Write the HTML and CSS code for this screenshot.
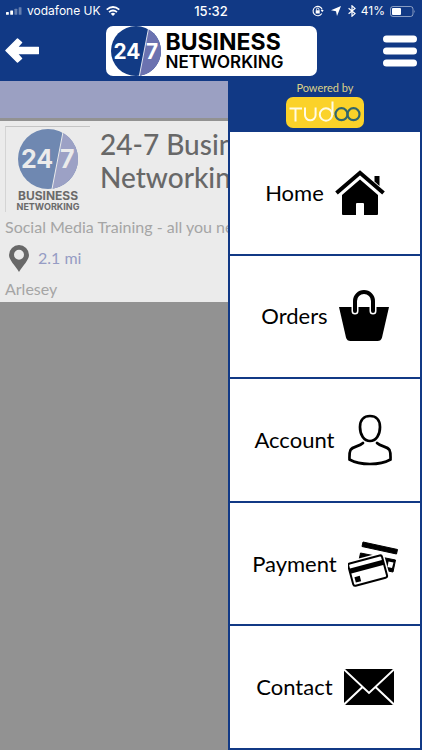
FILE: index.html
```html
<!DOCTYPE html>
<html lang="en">
<head>
<meta charset="utf-8">
<meta name="viewport" content="width=device-width, initial-scale=1">
<title>24-7 Business Networking</title>
<link rel="stylesheet" href="styles.css">
</head>
<body>
<div class="app">
  <div class="status">
    <div class="status-side">
      <svg class="signal" viewBox="0 0 17 8" aria-hidden="true"><g fill="#fff"><rect x="0" y="5" width="3" height="3" rx=".6"/><rect x="4.500" y="3.500" width="3" height="4.500" rx=".6"/><rect x="9" y="1.500" width="3" height="6.500" rx=".6" opacity=".35"/><rect x="13.500" y="0" width="3" height="8" rx=".6" opacity=".35"/></g></svg>
      <span>vodafone UK</span>
      <svg class="wifi" viewBox="0 0 14 10" fill="none" stroke="#fff" stroke-width="1.700" aria-hidden="true"><path d="M.7 3.700Q7-1.700 13.300 3.700M3 6.200Q7 2.800 11 6.200"/><path d="M7 10 4.700 7.700Q7 5.900 9.300 7.700Z" fill="#fff" stroke="none"/></svg>
    </div>
    <span class="clock">15:32</span>
    <div class="status-side status-right">
      <svg class="glyph lock" viewBox="0 0 12 12" fill="none" stroke="#fff" aria-hidden="true"><path d="M9.800 8.500A4.700 4.700 0 1 1 10.200 4.500" stroke-width="1.100"/><path d="M8.700 5h3L10.200 7.200Z" fill="#fff" stroke="none"/><rect x="3.700" y="5.300" width="4" height="3.200" fill="#fff" stroke="none"/><path d="M4.500 5.500V4.300a1.200 1.200 0 0 1 2.400 0v1.200" stroke-width=".9"/></svg>
      <svg class="glyph arrow" viewBox="0 0 10 10" aria-hidden="true"><path d="M10 0 6 10 5 5.200 0 4.200Z" fill="#fff"/></svg>
      <svg class="glyph bt" viewBox="0 0 8 12" fill="none" stroke="#fff" stroke-width="1.200" aria-hidden="true"><path d="M.6 3.300 7 8.600 4 11.200V.8L7 3.400.6 8.700"/></svg>
      <span>41%</span>
      <svg class="battery" viewBox="0 0 26 11" aria-hidden="true"><rect x=".5" y=".5" width="22.500" height="10" rx="2.500" fill="none" stroke="#fff" opacity=".5"/><rect x="2" y="2" width="9" height="7" rx="1" fill="#fff"/><path d="M24.300 3.700q1.500 1.800 0 3.600z" fill="#fff" opacity=".5"/></svg>
    </div>
  </div>

  <header class="header">
    <button class="icon-button" type="button" aria-label="Back">
      <svg class="back" viewBox="0 0 34 25" aria-hidden="true"><path d="M12.500 1 1 12.500 12.500 24 16.500 20.500 12 15.500H33.500V9.500H12L16.500 4.500Z" fill="#fff" stroke="#fff" stroke-width="1.500" stroke-linejoin="round"/></svg>
    </button>
    <a class="brand" href="#">
      <svg class="brand-disc" viewBox="0 0 60 60" aria-hidden="true"><circle cx="30" cy="30" r="30" fill="#123b85"/><path d="M45 4A30 30 0 0 1 34 59.700Z" fill="#6b72b0"/><path d="M45 3 34 60" stroke="#fff"/><g class="disc-text"><text x="3" y="39">24</text><text x="42" y="39">7</text></g></svg>
      <span class="wordmark"><span class="word-top">BUSINESS</span><span class="word-bottom">NETWORKING</span></span>
    </a>
    <button class="icon-button" type="button" aria-label="Menu">
      <svg class="menu" viewBox="0 0 34 32" aria-hidden="true"><path d="M3.500 4H30.500M3.500 16H30.500M3.500 28H30.500" stroke="#fff" stroke-width="7" stroke-linecap="round"/></svg>
    </button>
  </header>

  <main class="stage">
    <div class="band"></div>
    <article class="listing">
      <div class="listing-head">
        <div class="thumb">
          <svg class="thumb-disc" viewBox="0 0 60 60" aria-hidden="true"><circle cx="30" cy="30" r="30" fill="#6f88b1"/><path d="M45 4A30 30 0 0 1 34 59.700Z" fill="#9ca1c5"/><path d="M45 3 34 60" stroke="#ebebeb"/><g class="disc-text disc-text-dim"><text x="3" y="39">24</text><text x="42" y="39">7</text></g></svg>
          <span class="thumb-top">BUSINESS</span>
          <span class="thumb-bottom">NETWORKING</span>
        </div>
        <h1 class="title">24-7 Business<br>Networking</h1>
      </div>
      <p class="blurb">Social Media Training - all you need</p>
      <p class="distance">
        <svg class="pin" viewBox="0 0 20 27" aria-hidden="true"><path fill-rule="evenodd" d="M10 0A10 10 0 0 0 0 10C0 15 6 20.500 10 27 14 20.500 20 15 20 10A10 10 0 0 0 10 0ZM10 4.800A5 5 0 1 1 10 14.800 5 5 0 0 1 10 4.800Z" fill="#686868"/></svg>
        <span>2.1 mi</span>
      </p>
      <p class="blurb">Arlesey</p>
    </article>

    <aside class="drawer">
      <div class="powered">
        <span>Powered by</span>
        <svg class="tudoo" viewBox="0 0 78 31" role="img" aria-label="Tudoo"><rect width="78" height="31" rx="7" fill="#fbd229"/><g fill="none" stroke="#fffbe5" stroke-width="2"><path d="M3.500 11.500H16M9.500 11.500V24.500M19 10.500V18a5.300 5.300 0 0 0 10.600 0V10.500M46.500 4.500V18"/><circle cx="40" cy="17.500" r="6.200"/></g><g fill="none" stroke="#32656d" stroke-width="2.200"><circle cx="55.500" cy="17.200" r="6"/><circle cx="67.500" cy="17.200" r="6"/></g></svg>
      </div>
      <nav class="nav">
        <a class="nav-item" href="#"><span>Home</span>
          <svg class="nav-icon" viewBox="0 0 50 52" aria-hidden="true"><path d="M39.500 9H44.500V19L39.500 14.500Z"/><path d="M1.500 26 25 5.800 48.500 26" fill="none" stroke="#000" stroke-width="4"/><path d="M25 12.500 43 28V47a1 1 0 0 1-1 1H29V37a1 1 0 0 0-1-1H22a1 1 0 0 0-1 1V48H8a1 1 0 0 1-1-1V28Z"/></svg></a>
        <a class="nav-item" href="#"><span>Orders</span>
          <svg class="nav-icon" viewBox="0 0 50 52" aria-hidden="true"><path d="M0 17H50L43 47.500Q42 51 38.500 51H11.500Q8 51 7 47.500Z"/><path d="M16 21V11a9 9 0 0 1 18 0V21" fill="none" stroke="#fff" stroke-width="7" stroke-linecap="round"/><path d="M16 21V11a9 9 0 0 1 18 0V21" fill="none" stroke="#000" stroke-width="4" stroke-linecap="round"/></svg></a>
        <a class="nav-item" href="#"><span>Account</span>
          <svg class="nav-icon" viewBox="0 0 50 52" fill="none" stroke="#000" stroke-width="2.700" stroke-linecap="round" aria-hidden="true"><path d="M25 2C31 2 35 6 35 13 35 21 31 27 25 27S15 21 15 13C15 6 19 2 25 2Z"/><path d="M18 29C14 33 8 32 5.500 36 4 39 4.500 42 4.500 45.500 15 51.500 35 51.500 45.500 45.500 45.500 42 46 39 44.500 36 42 32 36 33 32 29"/></svg></a>
        <a class="nav-item" href="#"><span>Payment</span>
          <svg class="nav-icon" viewBox="0 0 50 52" aria-hidden="true"><path d="M15 4 49.500 11.500 48.500 16 14 8.500Z" stroke="#000" stroke-linejoin="round"/><path d="M12.500 15 47.500 22 45 34 10 27Z" stroke="#000" stroke-linejoin="round"/><path d="M40.500 23.500 45.500 24.500 44 30 39.500 29Z" fill="#fff"/><g transform="rotate(-15 20 32)"><rect x="1.500" y="20.500" width="36" height="24" rx="2" fill="#fff" stroke="#fff" stroke-width="4"/><rect x="2" y="21" width="35" height="23" rx="2" fill="#fff" stroke="#000" stroke-width="2"/><path d="M2 26H37V31H2Z"/><rect x="5" y="35.500" width="5.500" height="5.500"/></g></svg></a>
        <a class="nav-item" href="#"><span>Contact</span>
          <svg class="nav-icon" viewBox="0 0 50 52" aria-hidden="true"><rect x="0" y="8" width="50" height="36" rx="2"/><path d="M0 8.500 25 32 50 8.500M0 43.500 18.500 26M50 43.500 31.500 26" fill="none" stroke="#fff" stroke-width="2"/></svg></a>
      </nav>
    </aside>
  </main>
</div>
</body>
</html>
```
FILE: styles.css
```css
* {
  box-sizing: border-box;
}

body {
  margin: 0;
  font-family: Lato, "Open Sans", sans-serif;
  background: #929292;
}

.app {
  display: flex;
  flex-direction: column;
  min-height: 100vh;
}

svg {
  display: block;
  flex: none;
}

/* Status bar */
.status {
  display: grid;
  grid-template-columns: 1fr auto 1fr;
  align-items: center;
  height: 22px;
  padding: 0 6px;
  background: #113985;
  color: #fff;
  font: 12px/16px Inter, sans-serif;
}

.status-side {
  display: flex;
  align-items: center;
  gap: 5px;
  white-space: nowrap;
}

.status-right {
  justify-content: flex-end;
}

.clock {
  font-size: 13px;
  font-weight: 500;
}

.signal { width: 16px; height: 8px; }
.wifi { width: 14px; height: 10px; }
.lock { width: 12px; height: 12px; }
.arrow { width: 10px; height: 10px; }
.bt { width: 8px; height: 12px; }
.battery { width: 26px; height: 11px; }

.lock,
.arrow {
  margin-right: 2px;
}

/* Header */
.header {
  display: flex;
  align-items: center;
  justify-content: space-between;
  height: 59px;
  padding: 0 5px 2px;
  background: #113985;
}

.icon-button {
  padding: 0;
  border: 0;
  background: none;
}

.back { width: 34px; height: 25px; }
.menu { width: 34px; height: 32px; }

.brand {
  display: flex;
  align-items: center;
  gap: 5px;
  width: 211px;
  height: 50px;
  padding: 0 5px;
  border-radius: 7px;
  background: #fff;
  color: #000;
  text-decoration: none;
  font-family: Inter, sans-serif;
  font-weight: 700;
}

.brand-disc { width: 50px; height: 50px; }

.disc-text {
  font: 700 25px Inter, sans-serif;
  fill: #fff;
}

.disc-text-dim { fill: #ebebeb; }

.wordmark {
  display: flex;
  flex-direction: column;
}

.word-top { font-size: 23px; line-height: 22px; }
.word-bottom { font-size: 17px; line-height: 18px; font-weight: 600; }

/* Dimmed page behind the drawer */
.stage {
  position: relative;
  flex: 1;
  display: flex;
  flex-direction: column;
  overflow: hidden;
}

.band {
  height: 40px;
  border-bottom: 3px solid #929292;
  background: #9ba0c2;
}

.listing {
  padding: 5px 5px 2px;
  background: #ebebeb;
  color: #a5a5a5;
  white-space: nowrap;
}

.listing-head {
  display: flex;
  gap: 10px;
}

.thumb {
  display: flex;
  flex-direction: column;
  align-items: center;
  flex: none;
  width: 85px;
  height: 86px;
  padding-top: 2px;
  border-top: 1px solid #c4c4c4;
  border-left: 1px solid #d4d4d4;
  color: #6a6a6a;
  font-family: Inter, sans-serif;
  font-weight: 700;
}

.thumb-disc { width: 60px; height: 60px; }
.thumb-top { font-size: 12px; line-height: 13px; }
.thumb-bottom { font-size: 9px; line-height: 9px; }

.title {
  margin: 2px 0 0;
  color: #686868;
  font-size: 28px;
  line-height: 33px;
  font-weight: 500;
}

.blurb,
.distance {
  margin: 0;
  font-size: 16px;
  line-height: 22px;
}

.listing-head + .blurb {
  margin-top: 4px;
}

.distance {
  display: flex;
  align-items: center;
  gap: 9px;
  height: 40px;
  padding-left: 4px;
  color: #969cc4;
}

.pin { width: 20px; height: 27px; }

/* Drawer */
.drawer {
  position: absolute;
  top: 0;
  right: 0;
  bottom: 0;
  display: flex;
  flex-direction: column;
  width: 46%;
  min-width: 190px;
  padding: 0 2px 2px;
  background: #113985;
}

.powered {
  display: flex;
  flex-direction: column;
  align-items: center;
  gap: 2px;
  height: 51px;
  color: #ddd188;
  font-size: 11px;
  line-height: 14px;
}

.tudoo { width: 78px; height: 31px; }

.nav {
  flex: 1;
  display: flex;
  flex-direction: column;
  gap: 2px;
}

.nav-item {
  flex: 1;
  display: flex;
  align-items: center;
  justify-content: center;
  gap: 11px;
  background: #fff;
  color: #000;
  font-size: 22px;
  line-height: 26px;
  text-decoration: none;
}

.nav-icon { width: 50px; height: 52px; }
```
